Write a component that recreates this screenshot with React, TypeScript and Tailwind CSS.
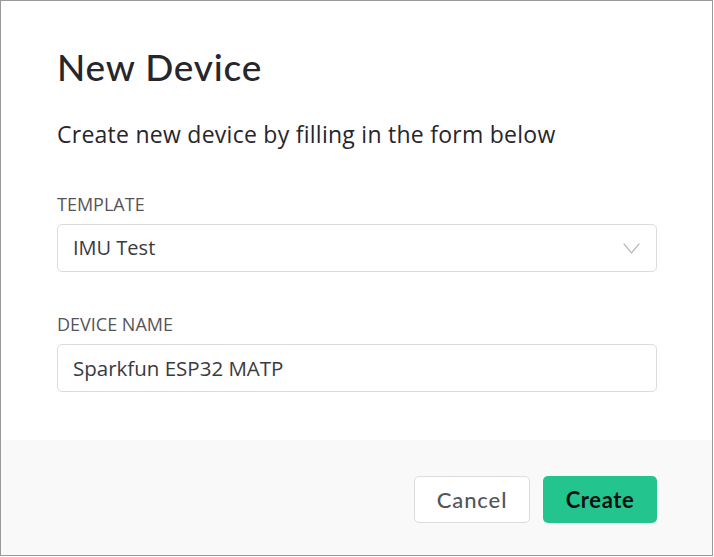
export default function App() {
  return (
    <div className="h-[557px] w-[714px] bg-white">
      <div className="flex h-[556px] w-[713px] flex-col border border-[#9a9a9a] bg-white" style={{ fontFamily: '"Open Sans", sans-serif' }}>
        {/* Body */}
        <div className="flex-1 pl-[56px] pr-[55px] pt-[44px]">
          <h1 className="text-[37px] leading-[44px] font-medium tracking-[0.8px] text-[#26262b]" style={{ fontFamily: 'Lato, sans-serif' }}>
            New Device
          </h1>
          <p className="mt-[30px] text-[23px] leading-[30px] tracking-[0.26px] text-[#26262b]">
            Create new device by filling in the form below
          </p>

          <Field label="TEMPLATE" className="mt-[44px]">
            <div className="flex h-[48px] items-center justify-between rounded-[5px] border border-[#dcdcdc] pl-[15px] pr-[16px]">
              <span className="text-[20px] text-[#3a3a3e]">IMU Test</span>
              <svg width="17" height="11" viewBox="0 0 17 11" fill="none" className="text-[#b4b4b4]">
                <polyline points="0.7,0.7 8.5,9.8 16.3,0.7" stroke="currentColor" strokeWidth="1.3" />
              </svg>
            </div>
          </Field>

          <Field label="DEVICE NAME" className="mt-[41px]">
            <div className="flex h-[48px] items-center rounded-[5px] border border-[#dcdcdc] pl-[15px]">
              <span className="text-[20.5px] text-[#3a3a3e]">Sparkfun ESP32 MATP</span>
            </div>
          </Field>
        </div>

        {/* Footer */}
        <div className="flex h-[115px] items-start justify-end gap-[13px] bg-[#f9f9f9] pr-[55px] pt-[36px]">
          <button className="h-[47px] w-[116px] rounded-[5px] border border-[#dcdcdc] bg-white text-[22px] font-medium tracking-[0.9px] text-[#555559]" style={{ fontFamily: 'Lato, sans-serif' }}>
            Cancel
          </button>
          <button className="h-[47px] w-[114px] rounded-[5px] bg-[#23c48e] text-[22px] font-bold tracking-[0.6px] text-[#111]" style={{ fontFamily: 'Lato, sans-serif' }}>
            Create
          </button>
        </div>
      </div>
    </div>
  );
}

function Field({ label, className, children }: { label: string; className?: string; children: React.ReactNode }) {
  return (
    <div className={className}>
      <div className="mb-[9px] text-[18px] leading-[22px] text-[#555559]">{label}</div>
      {children}
    </div>
  );
}
